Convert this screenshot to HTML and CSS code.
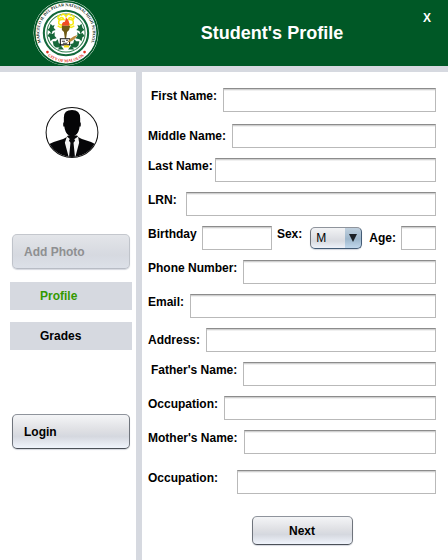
FILE: index.html
```html
<!DOCTYPE html>
<html lang="en">
<head>
<meta charset="utf-8">
<meta name="viewport" content="width=device-width, initial-scale=1">
<title>Student's Profile</title>
<link rel="stylesheet" href="styles.css">
</head>
<body>
<header class="header">
  <svg class="seal" viewBox="0 0 64 64" role="img" aria-label="School seal">
    <defs>
      <path id="ring-top" d="M10.1 46 A26 26 0 1 1 53.9 46"/>
      <path id="ring-bottom" d="M13 53 A28.500 28.500 0 0 0 51 53"/>
    </defs>
    <circle cx="32" cy="32" r="31.5" fill="#fff"/>
    <circle cx="32" cy="32" r="30.300" fill="none" stroke="#005826" stroke-width="1.600"/>
    <circle cx="32" cy="32" r="21.5" fill="#fff" stroke="#12683a" stroke-width="2"/>
    <circle cx="32" cy="32" r="18.5" fill="none" stroke="#2c7d4c" stroke-width="1"/>
    <text class="seal-text" fill="#0a2413" text-anchor="middle"><textPath href="#ring-top" startOffset="50%">MARCELO H. DEL PILAR NATIONAL HIGH SCHOOL</textPath></text>
    <text class="seal-text" fill="#e0301c" text-anchor="middle"><textPath href="#ring-bottom" startOffset="50%">CITY OF MALOLOS</textPath></text>
    <circle cx="14" cy="50.500" r="1.300" fill="#e0301c"/>
    <circle cx="50" cy="50.500" r="1.300" fill="#e0301c"/>
    <g fill="#17683a">
      <path d="M17 23l2 2 2-1-1 3 2 2-3 1-1 3-2-3-2-1 2-2z"/>
      <path d="M16 32l3 1 2-2 0 4 2 2-4 1-2 2-1-4-2-1z"/>
      <path d="M19 40l3 0 2-2 1 4 3 1-2 3-4 0-2-2z"/>
      <path d="M47 23l-2 2-2-1 1 3-2 2 3 1 1 3 2-3 2-1-2-2z"/>
      <path d="M48 32l-3 1-2-2 0 4-2 2 4 1 2 2 1-4 2-1z"/>
      <path d="M45 40l-3 0-2-2-1 4-3 1 2 3 4 0 2-2z"/>
      <path d="M24 48l3-4 3 4zM34 48l3-4 3 4z"/>
    </g>
    <g fill="none" stroke="#f7ea13" stroke-width="1.500">
      <path d="M26 15q-3 1-1 4q3-4 5 0q-6-1-5 4q3 3 5-1M38 15q3 1 1 4q-3-4-5 0q6-1 5 4q-3 3-5-1M27 15q3-3 5 1q2-4 5-1M24 25q3 3 6 0M40 25q-3 3-6 0"/>
    </g>
    <path d="M32 17q4 4 3 8h-7q0-4 3-4z" fill="#f04a24"/>
    <path d="M28 25h8l-1 4-2 2-1 7h-1l-1-7-2-2z" fill="#6e5a16"/>
    <path d="M26.500 37.500h9v6h-9z" fill="#fff" stroke="#111"/>
    <path d="M28 40h3M32 39h2M29 42h4" stroke="#333" stroke-width="1"/>
    <path d="M30 44h5v2h-5z" fill="#f4de12"/>
    <path d="M32 44q3-8 11-10q-3 6-9 7z" fill="#bd8b3c"/>
  </svg>
  <h1 class="title">Student's Profile</h1>
  <button class="close" type="button" aria-label="Close">X</button>
</header>
<div class="layout">
  <aside class="sidebar">
    <svg class="avatar" viewBox="0 0 52 50" role="img" aria-label="Student photo">
      <defs><clipPath id="face"><ellipse cx="26" cy="25" rx="25" ry="24"/></clipPath></defs>
      <ellipse cx="26" cy="25" rx="25.400" ry="24.400" fill="#fff"/>
      <g clip-path="url(#face)">
        <path d="M0 50V38Q7 34 15 32Q20 31 22 28H31Q33 31 38 32Q46 34 52 38V50z" fill="#060608"/>
        <path d="M21 29L26 33L32 29L33 35L29 50H23L19 35z" fill="#f4f4f4"/>
        <path d="M24 31h4l1 2-1.500 2L29 50h-6l1.500-15L23 33z" fill="#08080a"/>
        <path d="M18 10Q18 3 26 3Q34 3 34 11V15Q35 15 34.500 19H33.500Q33 25 29 28Q26 30 23 28Q19 25 18.500 19H17.500Q17 15 18 15z" fill="#050507"/>
      </g>
      <ellipse cx="26" cy="25" rx="25.400" ry="24.400" fill="none" stroke="#111" stroke-width="1"/>
    </svg>
    <button class="button photo" type="button" disabled>Add Photo</button>
    <nav class="menu">
      <a class="menu-item active" href="#profile" aria-current="page">Profile</a>
      <a class="menu-item" href="#grades">Grades</a>
    </nav>
    <button class="button login" type="button">Login</button>
  </aside>
  <main class="content" id="profile">
    <form class="form">
      <div class="row spaced inset"><label for="first">First Name:</label><input id="first" type="text"></div>
      <div class="row centered"><label for="middle">Middle Name:</label><input id="middle" type="text"></div>
      <div class="row tight"><label for="last">Last Name:</label><input id="last" type="text"></div>
      <div class="row wide"><label for="lrn">LRN:</label><input id="lrn" type="text"></div>
      <div class="row personal">
        <label for="birthday">Birthday</label><input class="birthday" id="birthday" type="text">
        <label for="sex">Sex:</label>
        <span class="picker"><select id="sex"><option>M</option><option>F</option></select><svg class="arrow" viewBox="0 0 16 20" aria-hidden="true"><path d="M4 6h8L8 14z" fill="#1b2026"/></svg></span>
        <label class="low" for="age">Age:</label><input class="age" id="age" type="text">
      </div>
      <div class="row"><label for="phone">Phone Number:</label><input id="phone" type="text"></div>
      <div class="row"><label for="email">Email:</label><input id="email" type="email"></div>
      <div class="row centered"><label for="address">Address:</label><input id="address" type="text"></div>
      <div class="row inset"><label for="father">Father's Name:</label><input id="father" type="text"></div>
      <div class="row"><label for="father-job">Occupation:</label><input id="father-job" type="text"></div>
      <div class="row spaced-more"><label for="mother">Mother's Name:</label><input id="mother" type="text"></div>
      <div class="row widest"><label for="mother-job">Occupation:</label><input id="mother-job" type="text"></div>
      <button class="button next" type="button">Next</button>
    </form>
  </main>
</div>
</body>
</html>
```
FILE: styles.css
```css
* {
  box-sizing: border-box;
}

body {
  margin: 0;
  min-height: 100vh;
  display: flex;
  flex-direction: column;
  background: #fff;
  color: #000;
  font: bold 12px/16px "Liberation Sans", Arial, sans-serif;
}

.header {
  display: grid;
  grid-template-columns: 142px 1fr 42px;
  border-bottom: 6px solid #d6d9e0;
  background: #005826;
  color: #fff;
}

.seal {
  width: 66px;
  height: 66px;
  margin-left: 33px;
}

.seal-text {
  font: bold 4px "Liberation Serif", serif;
}

.title {
  margin: 0;
  align-self: center;
  padding-right: 4px;
  font-size: 18px;
  line-height: 24px;
  text-align: center;
}

.close {
  align-self: start;
  margin-top: 8px;
  padding: 0;
  border: 0;
  background: none;
  color: inherit;
  font: inherit;
  line-height: 20px;
}

.layout {
  flex: 1;
  display: grid;
  grid-template-columns: 142px minmax(0, 1fr);
}

.sidebar {
  display: flex;
  flex-direction: column;
  padding: 35px 4px 0 10px;
  border-right: 6px solid #d6d9e0;
}

.avatar {
  width: 54px;
  height: 51px;
  align-self: center;
  margin-left: 2px;
}

.button {
  border: 1px solid;
  border-color: #8f949c #6f747c #4b5058;
  border-radius: 5px;
  background: linear-gradient(#f4f5f7, #dfe0e4 45%, #d5d8df 65%, #f0f4fc);
  box-shadow: 0 1px 1px #d5d8df;
  color: #000;
  font: inherit;
}

.photo,
.login {
  height: 35px;
  margin: 0 2px;
  padding: 0 11px;
  text-align: left;
}

.photo {
  margin-top: 76px;
  border-color: #c4c7cd #bfc3ca #b8bcc5;
  background: linear-gradient(#e3e5e9, #d6d9e0 60%, #dce0e8);
  color: #8e8f91;
}

.login {
  margin-top: 64px;
}

.menu {
  display: grid;
  gap: 12px;
  margin-top: 13px;
}

.menu-item {
  padding: 6px 30px;
  background: #d6d9e0;
  color: #000;
  text-decoration: none;
}

.menu-item.active {
  color: #339900;
}

.content {
  padding: 16px 12px 14px 6px;
}

.form {
  display: grid;
  grid-template-columns: minmax(0, 1fr);
  gap: 10px;
}

.row {
  display: flex;
  align-items: flex-start;
  gap: 6px;
}

.row label {
  white-space: nowrap;
}

.inset {
  padding-left: 3px;
}

.spaced {
  margin-bottom: 2px;
}

.spaced-more {
  margin-bottom: 6px;
}

.centered {
  align-items: center;
}

.tight {
  gap: 2px;
}

.wide {
  gap: 9px;
}

.widest {
  gap: 19px;
}

.personal {
  gap: 5px;
}

.low {
  align-self: center;
  padding-left: 2px;
}

input {
  flex: 1;
  width: 0;
  min-width: 0;
  height: 24px;
  padding: 2px 6px;
  border: 1px solid #b9b9b9;
  border-top-color: #8c8c8c;
  border-radius: 0;
  background: #fff;
  box-shadow: inset 0 1px #d0d0d0, inset 0 2px #f0f0f0;
  font: 12px/16px "Liberation Sans", Arial, sans-serif;
}

.birthday {
  flex: 8;
}

.age {
  flex: 3;
}

.picker {
  display: grid;
  width: 52px;
  margin-top: 1px;
  margin-left: 3px;
}

.picker > * {
  grid-area: 1 / 1;
}

.picker select {
  width: 100%;
  height: 22px;
  padding: 0 5px;
  appearance: none;
  border: 1px solid;
  border-color: #8f949c #435b75 #435b75 #6f747c;
  border-radius: 5px;
  background:
    linear-gradient(#c0d0de, #9eb7cc 55%, #c0d7ec) right / 16px 100% no-repeat,
    linear-gradient(#f2f3f5, #d8dae0 65%, #eef2fa);
  box-shadow: 0 1px 1px #d5d8df;
  color: #000;
  font: 12px/20px "Liberation Sans", Arial, sans-serif;
}

.arrow {
  width: 16px;
  height: 20px;
  margin-top: 1px;
  margin-right: 1px;
  justify-self: end;
  pointer-events: none;
}

.next {
  width: 101px;
  height: 29px;
  margin-top: 12px;
  margin-left: 20px;
  justify-self: center;
}
```
